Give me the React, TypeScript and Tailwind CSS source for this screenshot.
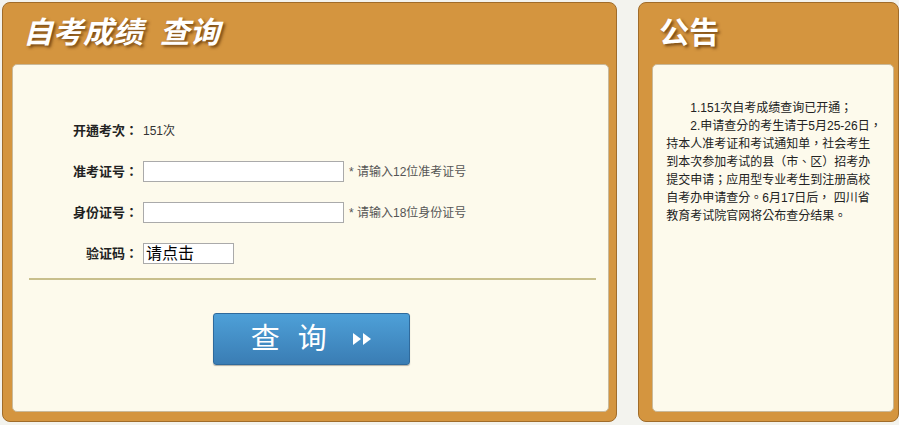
import { useState } from 'react';

const font = { fontFamily: '"Liberation Sans", "Noto Sans CJK SC", sans-serif' };

// one label/field row in the form
function Row({ label, children }: { label: string; children: React.ReactNode }) {
  return (
    <div className="flex items-center h-[21px]">
      <div
        className="w-[107px] text-right text-[13px] font-bold text-[#222] pr-[5px]"
        style={{ fontFamily: '"Liberation Sans", "Noto Sans CJK TC", sans-serif' }}
      >
        {label}
      </div>
      <div className="flex items-center">{children}</div>
    </div>
  );
}

export default function App() {
  const [zkz, setZkz] = useState('');
  const [sfz, setSfz] = useState('');

  return (
    <div
      className="w-[899px] h-[425px] overflow-hidden flex bg-[#f3f3ee]"
      style={font}
    >
      {/* query panel */}
      <div className="ml-[2px] mt-[2px] w-[616px] h-[420px] rounded-[8px] bg-[#d4953f] border border-[#a06c2a] flex flex-col">
        <div className="h-[61px] pl-[20px] pt-[12px]">
          <h1 className="text-[30px] leading-[36px] font-bold italic text-white [text-shadow:2px_2px_3px_rgba(80,40,0,0.7)]">
            自考成绩&nbsp;&nbsp;查询
          </h1>
        </div>
        <div className="ml-[9px] mr-[7px] mb-[9px] flex-1 rounded-[5px] bg-[#fdfaec] border border-[#c9b99a] flex flex-col">
          <div className="pt-[55px] pl-[23px] flex flex-col gap-[20px]">
            <Row label="开通考次：">
              <span className="text-[12px] text-[#333]">151次</span>
            </Row>
            <Row label="准考证号：">
              <input
                value={zkz}
                onChange={(e) => setZkz(e.target.value)}
                className="w-[201px] h-[21px] bg-white border border-[#aaa] outline-none"
              />
              <span className="ml-[5px] text-[12px] text-[#555]">* 请输入12位准考证号</span>
            </Row>
            <Row label="身份证号：">
              <input
                value={sfz}
                onChange={(e) => setSfz(e.target.value)}
                className="w-[201px] h-[21px] bg-white border border-[#aaa] outline-none"
              />
              <span className="ml-[5px] text-[12px] text-[#555]">* 请输入18位身份证号</span>
            </Row>
            <Row label="验证码：">
              <div className="w-[91px] h-[21px] bg-white border border-[#aaa] text-[16px] leading-[19px] pl-[2px] text-black">
                请点击
              </div>
            </Row>
          </div>
          <div className="mt-[14px] ml-[16px] mr-[12px] h-[2px] bg-[#c8bf8c]" />
          <div className="mt-[33px] flex justify-center pl-[2px]">
            <button className="w-[197px] h-[52px] rounded-[3px] border border-[#2f6a9c] bg-gradient-to-b from-[#4ea0d8] to-[#3a7db4] flex items-center justify-center text-white shadow-[0_1px_1px_rgba(0,0,0,0.3)]">
              <span className="text-[29px] leading-none tracking-[18px]">查询</span>
              <svg width="22" height="14" viewBox="0 0 22 14" className="ml-[6px]">
                <polygon points="2,1 10,7 2,13" fill="#fff" />
                <polygon points="12,1 20,7 12,13" fill="#fff" />
              </svg>
            </button>
          </div>
        </div>
      </div>

      {/* notice panel */}
      <div className="ml-[21px] mt-[2px] w-[261px] h-[420px] rounded-[8px] bg-[#d4953f] border border-[#a06c2a] flex flex-col">
        <div className="h-[61px] pl-[20px] pt-[12px]">
          <h2 className="text-[30px] leading-[36px] font-bold text-white [text-shadow:2px_2px_3px_rgba(80,40,0,0.7)]">
            公告
          </h2>
        </div>
        <div className="ml-[13px] mr-[4px] mb-[9px] flex-1 rounded-[5px] bg-[#fdfaec] border border-[#c9b99a] pt-[34px] pl-[13px] pr-[10px]">
          <p
            className="text-[12px] leading-[18px] text-[#222] whitespace-nowrap"
            style={{ fontFamily: '"Liberation Sans", "Noto Sans CJK TC", sans-serif' }}
          >
            <span className="pl-[24px]">1.151次自考成绩查询已开通；</span>
            <br />
            <span className="pl-[24px]">2.申请查分的考生请于5月25-26日，</span>
            <br />
            持本人准考证和考试通知单，社会考生
            <br />
            到本次参加考试的县（市、区）招考办
            <br />
            提交申请；应用型专业考生到注册高校
            <br />
            自考办申请查分。6月17日后， 四川省
            <br />
            教育考试院官网将公布查分结果。
          </p>
        </div>
      </div>
    </div>
  );
}
